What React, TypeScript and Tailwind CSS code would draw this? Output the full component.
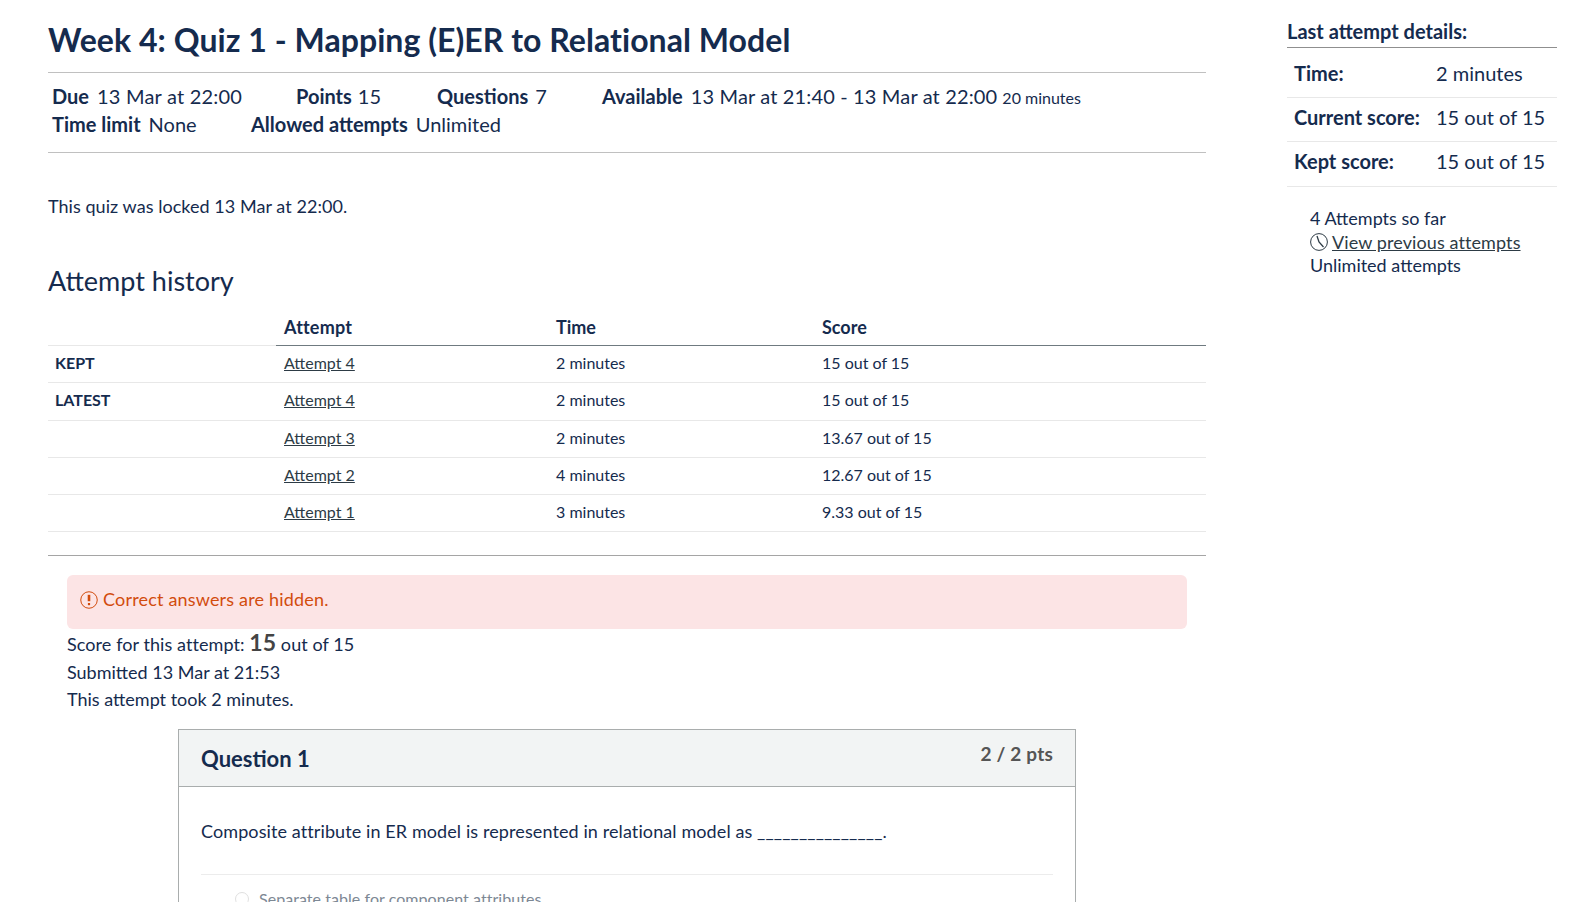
const attempts = [
  { tag: "KEPT", name: "Attempt 4", time: "2 minutes", score: "15 out of 15" },
  { tag: "LATEST", name: "Attempt 4", time: "2 minutes", score: "15 out of 15" },
  { tag: "", name: "Attempt 3", time: "2 minutes", score: "13.67 out of 15" },
  { tag: "", name: "Attempt 2", time: "4 minutes", score: "12.67 out of 15" },
  { tag: "", name: "Attempt 1", time: "3 minutes", score: "9.33 out of 15" },
]

const details = [
  { label: "Time:", value: "2 minutes", row: "h-[50px] pt-[13px]" },
  { label: "Current score:", value: "15 out of 15", row: "h-[44px] pt-[7px]" },
  { label: "Kept score:", value: "15 out of 15", row: "h-[45px] pt-[7px]" },
]

function AlertIcon() {
  return (
    <svg viewBox="0 0 18 18" className="h-[18px] w-[18px] shrink-0" fill="none" stroke="currentColor">
      <circle cx="9" cy="9" r="8.25" strokeWidth="1" />
      <path d="M9 3.8v6.4" strokeWidth="2.6" />
      <path d="M9 12v2.2" strokeWidth="2.2" />
    </svg>
  )
}

function ClockIcon() {
  return (
    <svg viewBox="0 0 18 18" className="h-[18px] w-[18px] shrink-0" fill="none" stroke="#2d3b45" strokeWidth="1">
      <circle cx="9" cy="9" r="8.4" />
      <path d="M7 3l2 6 4.5 5" strokeWidth="1.3" />
    </svg>
  )
}

export default function App() {
  return (
    <div className="flex h-[902px] overflow-hidden bg-white text-[#152b4e] font-['Lato',sans-serif]">
      <main className="w-[1158px] ml-[48px] shrink-0">
        <h1 className="h-[72px] pt-[18px] text-[32px] leading-[44px] font-bold tracking-[0.05px]">
          Week 4: Quiz 1 - Mapping (E)ER to Relational Model
        </h1>

        <div className="h-[81px] border-y border-[#c0c0c0] pl-[4px] pt-[10px] text-[20px] leading-[27px]">
          <div className="flex">
            <span className="w-[244px]">
              <b className="font-bold mr-[8px]">Due</b>
              <span className="tracking-[0.2px]">13 Mar at 22:00</span>
            </span>
            <span className="w-[141px]">
              <b className="font-bold mr-[6px]">Points</b>15
            </span>
            <span className="w-[165px]">
              <b className="font-bold mr-[7px]">Questions</b>7
            </span>
            <span>
              <b className="font-bold mr-[8px]">Available</b>
              <span className="tracking-[0.15px]">13 Mar at 21:40 - 13 Mar at 22:00</span>
              <span className="ml-[5px] text-[16px]">20 minutes</span>
            </span>
          </div>
          <div className="flex">
            <span className="w-[199px]">
              <b className="font-bold mr-[8px]">Time limit</b>None
            </span>
            <span>
              <b className="font-bold mr-[8px]">Allowed attempts</b>Unlimited
            </span>
          </div>
        </div>

        <p className="mt-[41px] text-[18px] leading-[24px] tracking-[0.05px]">This quiz was locked 13 Mar at 22:00.</p>

        <h2 className="mt-[43px] text-[27px] leading-[40px] font-normal">Attempt history</h2>

        <table className="mt-[7px] w-full table-fixed border-collapse text-[16px]">
          <thead>
            <tr className="h-[37px]">
              <th className="w-[228px] border-b border-[#e8e8e8]"></th>
              <th className="w-[272px] border-b border-[#6f7a80] pl-[8px] pt-[2px] text-left text-[18px] font-bold tracking-[0.2px]">Attempt</th>
              <th className="w-[266px] border-b border-[#6f7a80] pl-[8px] pt-[2px] text-left text-[18px] font-bold">Time</th>
              <th className="border-b border-[#6f7a80] pl-[8px] pt-[2px] text-left text-[18px] font-bold">Score</th>
            </tr>
          </thead>
          <tbody>
            {attempts.map((a, i) => (
              <tr key={i} className={i === 1 ? "h-[38px] border-b border-[#e8e8e8]" : "h-[37px] border-b border-[#e8e8e8]"}>
                <td className="pl-[7px] pb-[2px] font-bold">{a.tag}</td>
                <td className="pl-[8px] pb-[2px]">
                  <a className="text-[#2d3b45] underline">{a.name}</a>
                </td>
                <td className="pl-[8px] pb-[2px]">{a.time}</td>
                <td className="pl-[8px] pb-[2px]">{a.score}</td>
              </tr>
            ))}
          </tbody>
        </table>

        <div className="mt-[23px] border-t border-[#a5a5a5] px-[19px] pt-[19px]">
          <div className="flex h-[54px] items-center gap-[5px] rounded-[6px] bg-[#fce4e5] px-[13px] pb-[4px] text-[18px] tracking-[0.18px] text-[#d24c0d]">
            <AlertIcon />
            Correct answers are hidden.
          </div>

          <div className="text-[18px]">
            <div className="h-[30px] leading-[26px] tracking-[0.08px]">
              Score for this attempt: <b className="text-[23px] font-bold text-[#444]">15</b> out of 15
            </div>
            <div className="leading-[27.5px]">Submitted 13 Mar at 21:53</div>
            <div className="leading-[27px]">This attempt took 2 minutes.</div>
          </div>

          <section className="ml-[111px] mt-[16px] w-[898px] border border-[#a9adad]">
            <div className="flex h-[57px] justify-between border-b border-[#a9adad] bg-[#f2f4f4] px-[22px]">
              <h3 className="pt-[14px] text-[22px] leading-[30px] font-bold">Question 1</h3>
              <span className="pt-[10px] text-[19px] leading-[28px] font-bold tracking-[0.2px] text-[#555]">2 / 2 pts</span>
            </div>
            <div className="px-[22px]">
              <p className="h-[88px] border-b border-[#ececec] pt-[31px] text-[18px] leading-[26px] tracking-[0.1px]">
                Composite attribute in ER model is represented in relational model as _______________.
              </p>
              <div className="flex items-center gap-[10px] pl-[34px] pt-[14px] text-[16px] leading-[20px] tracking-[0.05px] text-[#7d8894]">
                <span className="h-[14px] w-[14px] rounded-full border border-[#e0e0e0]"></span>
                Separate table for component attributes
              </div>
            </div>
          </section>
        </div>
      </main>

      <aside className="ml-[81px] w-[270px] shrink-0 pt-[17px]">
        <h3 className="h-[31px] border-b border-[#8f8f8f] text-[20px] leading-[28px] font-bold">Last attempt details:</h3>
        {details.map((d) => (
          <div key={d.label} className={`flex items-start border-b border-[#e8e8e8] pl-[7px] text-[20px] leading-[24px] ${d.row}`}>
            <b className="w-[142px] font-bold">{d.label}</b>
            <span>{d.value}</span>
          </div>
        ))}
        <div className="mt-[20px] pl-[23px] text-[18px] leading-[23.5px]">
          <div>4 Attempts so far</div>
          <div className="flex items-center gap-[4px]">
            <ClockIcon />
            <a className="text-[#2d3b45] underline tracking-[0.1px]">View previous attempts</a>
          </div>
          <div>Unlimited attempts</div>
        </div>
      </aside>
    </div>
  )
}
